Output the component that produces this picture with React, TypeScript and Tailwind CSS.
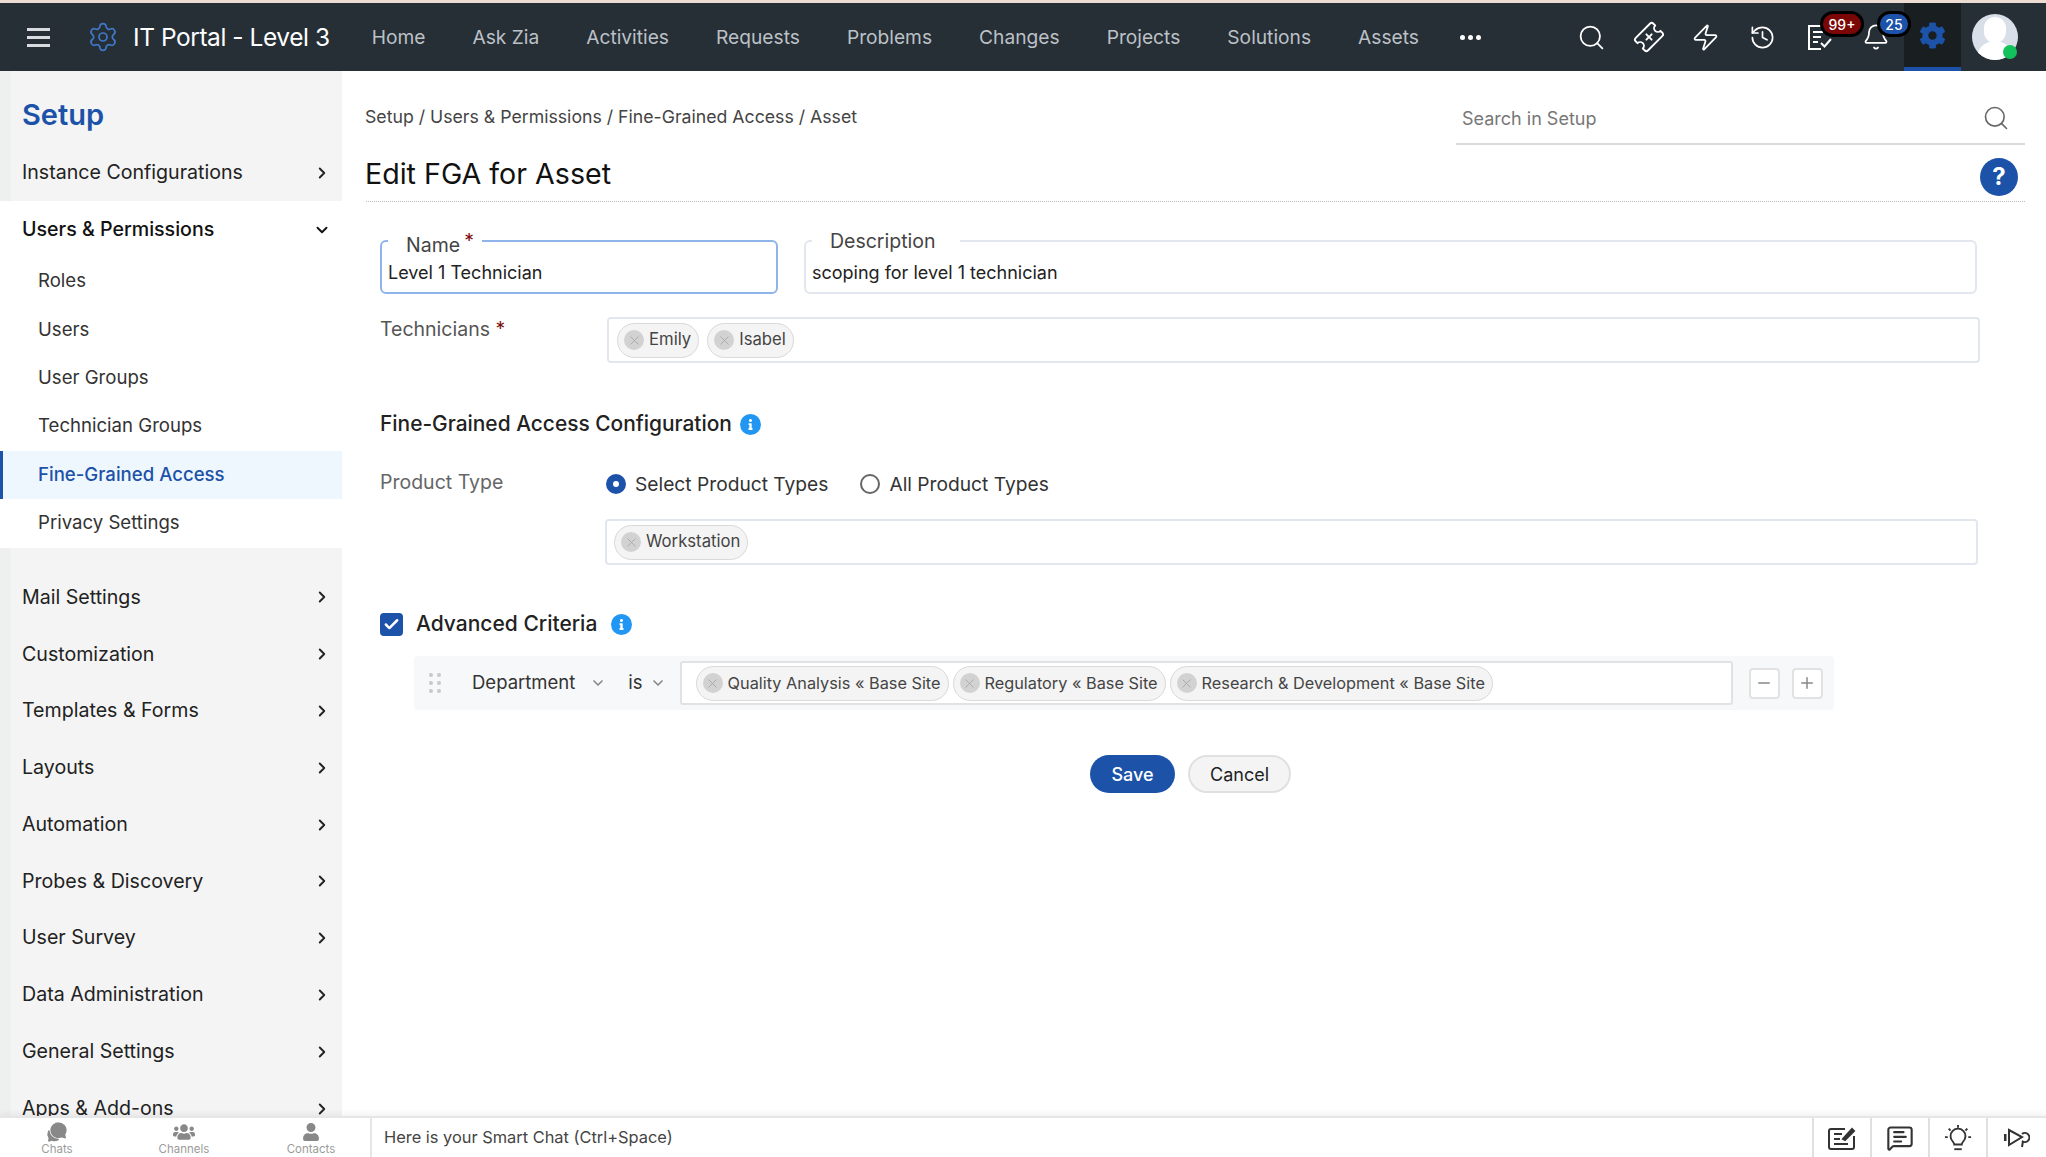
import { Search, ChevronRight, ChevronDown, TicketPlus, Zap, History, Bell, Settings, Plus, Minus, X, MessageSquareText, Check } from "lucide-react";
import { FaCog, FaUser, FaUsers, FaInfo } from "react-icons/fa";
import { IoChatbubbles } from "react-icons/io5";

const navItems = ["Home", "Ask Zia", "Activities", "Requests", "Problems", "Changes", "Projects", "Solutions", "Assets"];
const subItems = ["Roles", "Users", "User Groups", "Technician Groups", "Fine-Grained Access", "Privacy Settings"];
const lowerItems = ["Mail Settings", "Customization", "Templates & Forms", "Layouts", "Automation", "Probes & Discovery", "User Survey", "Data Administration", "General Settings", "Apps & Add-ons"];

function Chip({ label, small }: { label: string; small?: boolean }) {
  return (
    <span className={`flex h-[35px] shrink-0 items-center gap-[5px] rounded-full border border-[#d9d9d9] bg-[#f4f4f4] pl-[6px] pr-[7px] text-[#444] ${small ? "text-[16.3px]" : "text-[16.7px]"}`}>
      <span className="flex h-[20px] w-[20px] items-center justify-center rounded-full bg-[#d2d2d2]">
        <X size={15} strokeWidth={1.5} className="text-[#aaa]" />
      </span>
      {label}
    </span>
  );
}

function InfoDot() {
  return (
    <span className="flex h-[21px] w-[21px] items-center justify-center rounded-full bg-[#2196f3] text-white">
      <FaInfo size={11} />
    </span>
  );
}

function Badge({ text, color, className }: { text: string; color: string; className: string }) {
  return (
    <span className={`absolute flex h-[26px] items-center justify-center rounded-full border-[3px] border-black text-[14px] font-medium text-white ${color} ${className}`}>
      {text}
    </span>
  );
}

function Header() {
  return (
    <header className="flex h-[68px] shrink-0 items-center bg-[#262e36]">
      <div className="ml-[27px] flex w-[23px] flex-col gap-[5px]">
        <span className="h-[3px] bg-[#d9dcdf]" />
        <span className="h-[3px] bg-[#d9dcdf]" />
        <span className="h-[3px] bg-[#d9dcdf]" />
      </div>
      <Settings size={32} strokeWidth={1.3} className="ml-[37px] text-[#3f78c9]" />
      <span className="ml-[14px] text-[24.5px] tracking-[-0.45px] text-white">IT Portal - Level 3</span>
      <nav className="ml-[42px] flex items-center gap-[47px] text-[19.2px] text-[#bcc1c6]">
        {navItems.map((item) => (
          <span key={item}>{item}</span>
        ))}
      </nav>
      <div className="ml-[41px] flex gap-[3px]">
        <span className="h-[5px] w-[5px] rounded-full bg-white" />
        <span className="h-[5px] w-[5px] rounded-full bg-white" />
        <span className="h-[5px] w-[5px] rounded-full bg-white" />
      </div>
      <div className="relative ml-auto flex h-full items-center text-white">
        <span className="flex w-[57px] justify-center"><Search size={29} strokeWidth={1.5} /></span>
        <span className="flex w-[57px] justify-center"><TicketPlus size={30} strokeWidth={1.5} className="-rotate-45" /></span>
        <span className="flex w-[57px] justify-center"><Zap size={29} strokeWidth={1.5} /></span>
        <span className="flex w-[56px] justify-center"><History size={27} strokeWidth={1.5} /></span>
        <span className="flex w-[57px] justify-center">
          <svg width="28" height="28" viewBox="0 0 28 28" fill="none" stroke="currentColor" strokeWidth="2">
            <path d="M22 11V3H4v23h12" />
            <path d="M8 9h10M8 14h8M8 19h5" />
            <path d="M16 20l3.5 3.5L26 16" />
          </svg>
        </span>
        <span className="flex w-[57px] justify-center"><Bell size={28} strokeWidth={1.5} /></span>
        <Badge text="99+" color="bg-[#7b0606]" className="left-[257px] top-[8px] w-[44px]" />
        <Badge text="25" color="bg-[#1c52a8]" className="left-[314px] top-[8px] w-[34px]" />
        <span className="flex h-full w-[57px] items-center justify-center border-b-4 border-[#1c52a8] bg-[#191e21]">
          <FaCog size={27} className="text-[#1c52a8]" />
        </span>
        <div className="relative ml-[11px] mr-[28px] h-[46px] w-[46px] overflow-hidden rounded-full bg-[#d9dfe8]">
          <span className="absolute left-[12px] top-[3px] h-[26px] w-[22px] rounded-full bg-white" />
          <span className="absolute left-[4px] top-[27px] h-[24px] w-[38px] rounded-t-full bg-white" />
        </div>
        <span className="absolute right-[29px] top-[42px] h-[14px] w-[14px] rounded-full bg-[#12c35b]" />
      </div>
    </header>
  );
}

function Sidebar() {
  return (
    <aside className="w-[342px] shrink-0 overflow-hidden bg-[linear-gradient(90deg,#eef0ef_0,#eef0ef_10px,#f4f4f4_12px)]">
      <h2 className="pl-[22px] pt-[26px] text-[29px] leading-[36px] font-semibold text-[#1c52a8]">Setup</h2>
      <div className="mt-[11px] flex h-[57px] items-center justify-between pl-[22px] pr-[11px] text-[19.6px] text-[#222]">
        Instance Configurations
        <ChevronRight size={18} strokeWidth={2.5} />
      </div>
      <div className="h-[347px] bg-white">
        <div className="flex h-[57px] items-center justify-between pl-[22px] pr-[11px] text-[19.6px] font-medium text-[#111]">
          Users & Permissions
          <ChevronDown size={18} strokeWidth={2.5} />
        </div>
        <ul className="-mt-[1px] text-[18.6px] text-[#333]">
          {subItems.map((item) => {
            const active = item === "Fine-Grained Access";
            return (
              <li
                key={item}
                className={active
                  ? "flex h-[48.4px] items-center border-l-[3px] border-[#1c52a8] bg-[#eff7fe] pl-[35px] font-medium text-[#1c52a8]"
                  : "flex h-[48.4px] items-center pl-[38px]"}
              >
                {item}
              </li>
            );
          })}
        </ul>
      </div>
      <div className="pt-[21px]">
        {lowerItems.map((item) => (
          <div key={item} className="flex h-[56.8px] items-center justify-between pl-[22px] pr-[11px] text-[19.6px] text-[#222]">
            {item}
            <ChevronRight size={18} strokeWidth={2.5} />
          </div>
        ))}
      </div>
    </aside>
  );
}

function Legend({ label, value, required, wrap, gapClass, labelClass, borderClass }: { label: string; value: string; required?: boolean; wrap: string; gapClass: string; labelClass: string; borderClass: string }) {
  return (
    <div className={`relative h-[54px] rounded-[6px] border-2 ${wrap} ${borderClass}`}>
      <span className={`absolute -top-[2px] left-[6px] h-[2px] bg-white ${gapClass}`} />
      <span className={`absolute left-[24px] text-[19.5px] leading-[24px] text-[#444] ${labelClass}`}>
        {label}
        {required && <span className="absolute -right-[14px] -top-[4px] text-[#7b0d0d]">*</span>}
      </span>
      <div className="pl-[6px] pt-[19px] text-[18px] leading-[24px] text-[#222]">{value}</div>
    </div>
  );
}

function Content() {
  return (
    <main className="min-w-0 flex-1 bg-white pl-[24px] pr-[21px]">
      <div className="flex h-[74px] justify-between">
        <div className="-ml-[1px] pt-[33px] text-[17.7px] leading-[26px] text-[#444]">Setup / Users & Permissions / Fine-Grained Access / Asset</div>
        <div className="mt-[22px] flex h-[52px] w-[569px] items-center justify-between border-b-2 border-[#dadada] pl-[6px] pr-[15px] text-[18px] text-[#777]">
          Search in Setup
          <Search size={28} strokeWidth={1.4} className="text-[#666]" />
        </div>
      </div>
      <div className="flex h-[57px] items-start justify-between border-b border-dotted border-[#bdbdbd]">
        <h1 className="-ml-[1px] pt-[9px] text-[28.6px] leading-[40px] text-[#111]">Edit FGA for Asset</h1>
        <span className="mr-[7px] mt-[13px] flex h-[38px] w-[38px] items-center justify-center rounded-full bg-[#1c52a8] text-[24px] font-bold text-white">?</span>
      </div>

      <div className="ml-[14px] mr-[48px] mt-[38px] flex gap-[26px]">
        <Legend label="Name" value="Level 1 Technician" required wrap="w-[398px]" gapClass="w-[94px]" labelClass="top-[-9px]" borderClass="border-[#8fb4ea]" />
        <Legend label="Description" value="scoping for level 1 technician" wrap="flex-1" gapClass="w-[148px]" labelClass="top-[-13px]" borderClass="border-[#e2e6ee]" />
      </div>

      <div className="ml-[14px] mr-[45px] mt-[23px] flex">
        <span className="w-[227px] text-[19.5px] leading-[24px] text-[#555]">
          Technicians <span className="text-[#7b0d0d]">*</span>
        </span>
        <div className="flex h-[46px] flex-1 items-center gap-[8px] rounded-[4px] border-2 border-[#e2e6ee] pl-[8px]">
          <Chip label="Emily" />
          <Chip label="Isabel" />
        </div>
      </div>

      <div className="ml-[14px] mt-[47px] flex items-center gap-[8px]">
        <span className="text-[20.9px] leading-[28px] font-medium text-[#222]">Fine-Grained Access Configuration</span>
        <InfoDot />
      </div>

      <div className="ml-[14px] mr-[46px] mt-[32px] flex items-center">
        <span className="w-[227px] pb-[4px] text-[19.5px] leading-[24px] text-[#666]">Product Type</span>
        <span className="ml-[-1px] flex h-[20px] w-[20px] items-center justify-center rounded-full bg-[#1c52a8]">
          <span className="h-[6px] w-[6px] rounded-full bg-white" />
        </span>
        <span className="ml-[9px] text-[19.2px] leading-[24px] text-[#333]">Select Product Types</span>
        <span className="ml-[32px] h-[20px] w-[20px] rounded-full border-2 border-[#666]" />
        <span className="ml-[9px] text-[19.2px] leading-[24px] text-[#333]">All Product Types</span>
      </div>

      <div className="ml-[239px] mr-[47px] mt-[21px] flex h-[46px] items-center rounded-[4px] border-2 border-[#e2e6ee] pl-[7px]">
        <Chip label="Workstation" />
      </div>

      <div className="ml-[14px] mt-[45px] flex items-center">
        <span className="flex h-[23px] w-[23px] items-center justify-center rounded-[4px] bg-[#1c52a8] text-white">
          <Check size={17} strokeWidth={3.5} />
        </span>
        <span className="ml-[13px] text-[21px] leading-[28px] font-medium text-[#222]">Advanced Criteria</span>
        <span className="ml-[14px]"><InfoDot /></span>
      </div>

      <div className="ml-[48px] mt-[18px] flex h-[54px] w-[1420px] items-center rounded-[4px] bg-[#f7f8fa]">
        <div className="ml-[15px] grid w-[12px] grid-cols-2 gap-[4px]">
          {[0, 1, 2, 3, 4, 5].map((dot) => (
            <span key={dot} className="h-[4px] w-[4px] rounded-full bg-[#c8c8c8]" />
          ))}
        </div>
        <span className="ml-[31px] text-[18.5px] text-[#333]">Department</span>
        <ChevronDown size={16} strokeWidth={2.5} className="ml-[15px] text-[#888]" />
        <span className="ml-[22px] text-[18.5px] text-[#333]">is</span>
        <ChevronDown size={16} strokeWidth={2.5} className="ml-[7px] text-[#888]" />
        <div className="ml-[14px] flex h-[44px] w-[1053px] items-center gap-[4px] rounded-[3px] border-2 border-[#e2e2e2] bg-white pl-[14px]">
          <Chip small label="Quality Analysis « Base Site" />
          <Chip small label="Regulatory « Base Site" />
          <Chip small label="Research & Development « Base Site" />
        </div>
        <span className="ml-[16px] flex h-[31px] w-[31px] items-center justify-center rounded-[4px] border-2 border-[#e2e2e2] bg-white text-[#888]"><Minus size={18} /></span>
        <span className="ml-[12px] flex h-[31px] w-[31px] items-center justify-center rounded-[4px] border-2 border-[#e2e2e2] bg-white text-[#888]"><Plus size={18} /></span>
      </div>

      <div className="ml-[724px] mt-[45px] flex gap-[13px] text-[18px]">
        <button className="h-[38px] w-[85px] rounded-full bg-[#1c52a8] font-medium text-white">Save</button>
        <button className="h-[38px] w-[103px] rounded-full border-2 border-[#e0e0e0] bg-[#f4f4f4] text-[#222]">Cancel</button>
      </div>
    </main>
  );
}

function BottomBar() {
  const tabs = [
    { label: "Chats", icon: <IoChatbubbles size={22} /> },
    { label: "Channels", icon: <FaUsers size={22} /> },
    { label: "Contacts", icon: <FaUser size={18} /> },
  ];
  return (
    <footer className="relative z-10 flex h-[41px] shrink-0 items-stretch border-t-2 border-[#e6e6e6] bg-white shadow-[0_-3px_6px_rgba(0,0,0,0.05)]">
      <div className="flex w-[372px] justify-between border-r-2 border-[#e6e6e6] pl-[32px] pr-[34px] pt-[3px]">
        {tabs.map((tab) => (
          <div key={tab.label} className="flex w-[50px] flex-col items-center text-[#9b9b9b]">
            <span className="flex h-[21px] items-center text-[#888]">{tab.icon}</span>
            <span className="text-[11.5px] leading-[14px]">{tab.label}</span>
          </div>
        ))}
      </div>
      <div className="flex flex-1 items-center pl-[12px] text-[16.4px] text-[#444]">Here is your Smart Chat (Ctrl+Space)</div>
      <div className="flex text-[#333]">
        <span className="flex w-[58px] items-center justify-center border-l-2 border-[#e0e0e0]">
          <svg width="28" height="26" viewBox="0 0 28 26" fill="none" stroke="currentColor" strokeWidth="2">
            <path d="M17 4H3a2 2 0 0 0-2 2v16a2 2 0 0 0 2 2h21a2 2 0 0 0 2-2v-11" />
            <path d="M6 9h8M6 14h6M6 19h14" />
            <path d="M15 14l9-10 2 2-9 9z" fill="currentColor" />
          </svg>
        </span>
        <span className="flex w-[58px] items-center justify-center border-l-2 border-[#e0e0e0]"><MessageSquareText size={28} strokeWidth={1.8} /></span>
        <span className="flex w-[58px] items-center justify-center border-l-2 border-[#e0e0e0]">
          <svg width="28" height="28" viewBox="0 0 30 30" fill="none" stroke="currentColor" strokeWidth="2">
            <path d="M15 1v3M5 5l2 2M25 5l-2 2M1 14h3M26 14h3" />
            <path d="M11 22c0-3-4-4-4-9a8 8 0 0 1 16 0c0 5-4 6-4 9z" />
            <path d="M11 27h8" />
          </svg>
        </span>
        <span className="flex w-[60px] items-center justify-center border-l-2 border-[#e0e0e0]">
          <svg width="26" height="24" viewBox="0 0 26 24" fill="none" stroke="currentColor" strokeWidth="2">
            <path d="M5 4l13 7-13 8z" />
            <path d="M1 8v7" strokeWidth="3" />
            <path d="M18 8a4.5 4.5 0 1 1 0 7M19 15l-1 6" />
          </svg>
        </span>
      </div>
    </footer>
  );
}

export default function App() {
  return (
    <div className="flex h-[1157px] flex-col overflow-hidden bg-white font-['Inter',sans-serif]">
      <div className="h-[3px] shrink-0 bg-[#ecdcd2]" />
      <Header />
      <div className="flex min-h-0 flex-1">
        <Sidebar />
        <Content />
      </div>
      <BottomBar />
    </div>
  );
}
